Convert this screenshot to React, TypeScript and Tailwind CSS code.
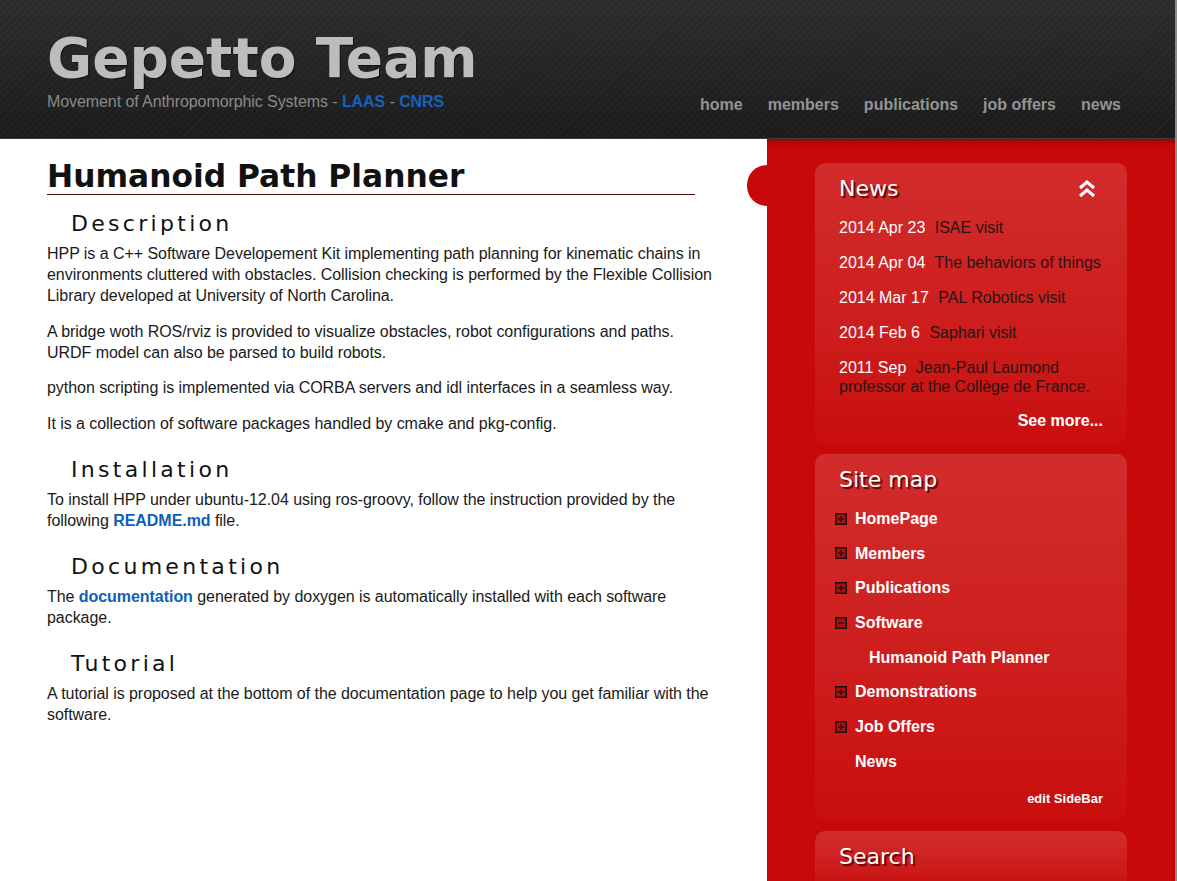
import { ReactNode } from "react"

const navLinks = ["home", "members", "publications", "job offers", "news"]

const news = [
  { date: "2014 Apr 23", title: "ISAE visit" },
  { date: "2014 Apr 04", title: "The behaviors of things" },
  { date: "2014 Mar 17", title: "PAL Robotics visit" },
  { date: "2014 Feb 6", title: "Saphari visit" },
  { date: "2011 Sep", title: "Jean-Paul Laumond professor at the Collège de France." },
]

const siteMap: { label: string; icon: "plus" | "minus" | "none"; child?: boolean }[] = [
  { label: "HomePage", icon: "plus" },
  { label: "Members", icon: "plus" },
  { label: "Publications", icon: "plus" },
  { label: "Software", icon: "minus" },
  { label: "Humanoid Path Planner", icon: "none", child: true },
  { label: "Demonstrations", icon: "plus" },
  { label: "Job Offers", icon: "plus" },
  { label: "News", icon: "none" },
]

function BoxIcon({ minus }: { minus?: boolean }) {
  return (
    <svg width="12" height="12" viewBox="0 0 12 12" className="shrink-0">
      <rect x="0.75" y="0.75" width="10.5" height="10.5" fill="#b80a0a" stroke="#111" strokeWidth="1.5" />
      <line x1="3" y1="6" x2="9" y2="6" stroke="#111" strokeWidth="1.4" />
      {!minus && <line x1="6" y1="3" x2="6" y2="9" stroke="#111" strokeWidth="1.4" />}
    </svg>
  )
}

function Chevrons() {
  return (
    <svg width="18" height="20" viewBox="0 0 18 20">
      <path d="M2 9 L9 3 L16 9" fill="none" stroke="#fff" strokeWidth="3.2" strokeLinejoin="miter" />
      <path d="M2 17 L9 11 L16 17" fill="none" stroke="#fff" strokeWidth="3.2" strokeLinejoin="miter" />
    </svg>
  )
}

function Card({
  title,
  extra,
  className = "",
  children,
}: {
  title: string
  extra?: ReactNode
  className?: string
  children?: ReactNode
}) {
  return (
    <div className={`rounded-[10px] bg-gradient-to-b from-[#d22c2c] to-[#c90d0d] px-6 pt-[13px] ${className}`}>
      <div className="flex items-center justify-between">
        <h3 className="font-['DejaVu_Sans',sans-serif] text-[22px] leading-[26px] text-white [text-shadow:2px_2px_1px_#5a0606]">
          {title}
        </h3>
        {extra}
      </div>
      {children}
    </div>
  )
}

function H2({ children, first }: { children: ReactNode; first?: boolean }) {
  return (
    <h2
      className={`${first ? "mt-[16.4px]" : "mt-[8.4px]"} mb-[6px] pl-6 font-['DejaVu_Sans',sans-serif] text-[22px] leading-[26px] tracking-[3.3px] text-[#111]`}
    >
      {children}
    </h2>
  )
}

function P({ children }: { children: ReactNode }) {
  return (
    <p className="mb-[14.5px] text-[16px] leading-[21px] tracking-[-0.05px] text-[#1a1a1a]">{children}</p>
  )
}

export default function App() {
  return (
    <div className="min-h-[881px] border-r-2 border-[#8a8a8a] bg-white font-['Liberation_Sans',Arial,sans-serif]">
      <header className="flex h-[139px] justify-between border-b border-[#3c3c3c] px-[47px] [background-image:repeating-linear-gradient(135deg,rgba(255,255,255,0.025)_0px,rgba(255,255,255,0.025)_2px,transparent_2px,transparent_5px),linear-gradient(to_bottom,#2c2c2c,#1b1b1b)]">
        <div className="pt-[31px]">
          <h1 className="font-['DejaVu_Sans',sans-serif] text-[55px] font-bold leading-[55px] text-[#bdbdbd] [text-shadow:1px_1px_0_#111]">
            Gepetto Team
          </h1>
          <div className="mt-[6px] text-[16px] leading-5 tracking-[-0.08px] text-[#8a8a8a]">
            Movement of Anthropomorphic Systems -{" "}
            <a className="font-bold text-[#1462be]">LAAS</a> -{" "}
            <a className="font-bold text-[#1462be]">CNRS</a>
          </div>
        </div>
        <nav className="flex items-end gap-[25px] pb-[23px] pr-[7px]">
          {navLinks.map((l) => (
            <a key={l} className="text-[16px] font-bold leading-5 text-[#949494]">
              {l}
            </a>
          ))}
        </nav>
      </header>

      <div className="flex">
        <main className="flex w-[767px] flex-col px-[47px] pt-[20px]">
          <h1 className="w-[648px] border-b border-[#5a0c0c] font-['DejaVu_Sans',sans-serif] text-[31.3px] font-bold leading-[35px] text-[#111]">
            Humanoid Path Planner
          </h1>
          <H2 first>Description</H2>
          <P>
            HPP is a C++ Software Developement Kit implementing path planning for kinematic chains in environments
            cluttered with obstacles. Collision checking is performed by the Flexible Collision Library developed at
            University of North Carolina.
          </P>
          <P>
            A bridge woth ROS/rviz is provided to visualize obstacles, robot configurations and paths. URDF model can
            also be parsed to build robots.
          </P>
          <P>python scripting is implemented via CORBA servers and idl interfaces in a seamless way.</P>
          <P>It is a collection of software packages handled by cmake and pkg-config.</P>
          <H2>Installation</H2>
          <P>
            To install HPP under ubuntu-12.04 using ros-groovy, follow the instruction provided by the following{" "}
            <a className="font-bold text-[#0f5fb8]">README.md</a> file.
          </P>
          <H2>Documentation</H2>
          <P>
            The <a className="font-bold text-[#0f5fb8]">documentation</a> generated by doxygen is automatically
            installed with each software package.
          </P>
          <H2>Tutorial</H2>
          <P>
            A tutorial is proposed at the bottom of the documentation page to help you get familiar with the software.
          </P>
        </main>

        <aside className="relative min-h-[742px] flex-1 bg-[#c80909] pl-[48px] pt-[24px] shadow-[inset_0_6px_6px_-4px_rgba(60,0,0,0.5)]">
          <div className="absolute left-[-20px] top-[26px] h-[41px] w-[40px] rounded-full bg-[#c80909]" />
          <div className="flex w-[312px] flex-col gap-[10px]">
            <Card
              title="News"
              className="pb-[14px]"
              extra={
                <span className="mr-[7px] flex">
                  <Chevrons />
                </span>
              }
            >
              <ul className="mt-4 flex flex-col gap-4 text-[16px] leading-[19px]">
                {news.map((n) => (
                  <li key={n.date}>
                    <span className="mr-[5px] text-white">{n.date}</span>{" "}
                    <span className="text-[#2a1414]">{n.title}</span>
                  </li>
                ))}
              </ul>
              <div className="mt-[15px] text-right text-[16px] font-bold leading-[19px] text-white">See more...</div>
            </Card>

            <Card title="Site map" className="pb-[14px]">
              <ul className="mt-[16px] flex flex-col gap-[15.7px] text-[16px] font-bold leading-[19px] text-white">
                {siteMap.map((s) => (
                  <li key={s.label} className={`-ml-1 flex items-center gap-[8px] ${s.child ? "pl-[34px]" : ""}`}>
                    {s.icon === "none" ? (
                      !s.child && <span className="w-[12px]" />
                    ) : (
                      <BoxIcon minus={s.icon === "minus"} />
                    )}
                    <span>{s.label}</span>
                  </li>
                ))}
              </ul>
              <div className="mt-[20px] text-right text-[13px] font-bold leading-4 text-white">edit SideBar</div>
            </Card>

            <Card title="Search">
              <div className="h-[20px]" />
            </Card>
          </div>
        </aside>
      </div>
    </div>
  )
}
